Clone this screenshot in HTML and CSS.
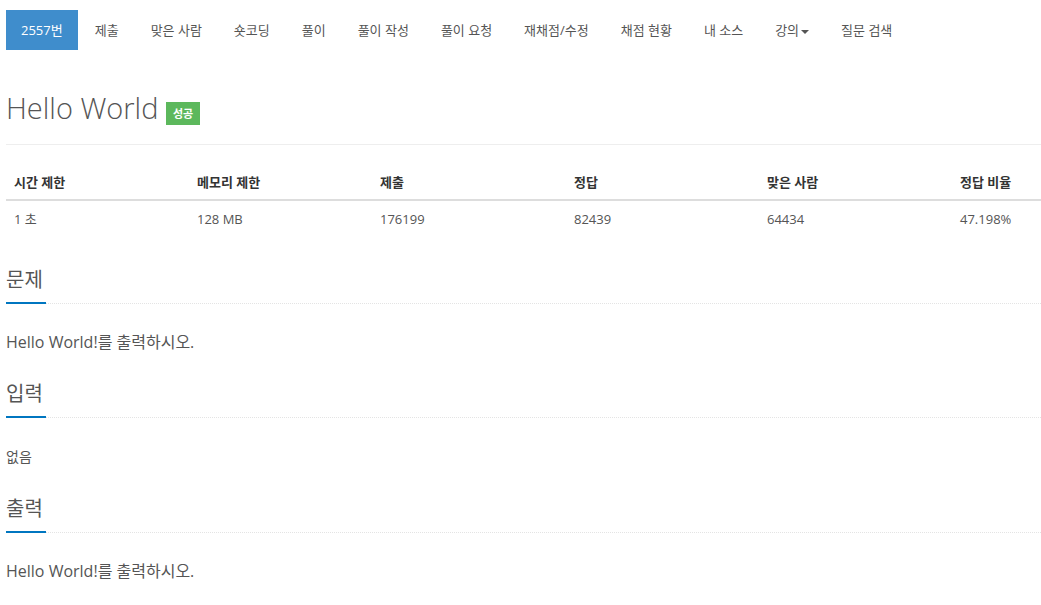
FILE: index.html
```html
<!DOCTYPE html>
<html lang="ko">
<head>
<meta charset="utf-8">
<link rel="stylesheet" href="styles.css">
</head>
<body>
<div class="wrap">
  <ul class="nav">
    <li class="active"><a>2557번</a></li>
    <li><a>제출</a></li>
    <li><a>맞은 사람</a></li>
    <li><a>숏코딩</a></li>
    <li><a>풀이</a></li>
    <li><a>풀이 작성</a></li>
    <li><a>풀이 요청</a></li>
    <li><a>재채점/수정</a></li>
    <li><a>채점 현황</a></li>
    <li><a>내 소스</a></li>
    <li><a>강의<span class="caret"></span></a></li>
    <li><a>질문 검색</a></li>
  </ul>

  <div class="page-header">
    <h1 class="title">Hello World <span class="label">성공</span></h1>
  </div>

  <table class="stats">
    <thead>
      <tr>
        <th class="c1">시간 제한</th>
        <th class="c2">메모리 제한</th>
        <th class="c3">제출</th>
        <th class="c4">정답</th>
        <th class="c5">맞은 사람</th>
        <th class="c6">정답 비율</th>
      </tr>
    </thead>
    <tbody>
      <tr>
        <td>1 초</td>
        <td>128 MB</td>
        <td>176199</td>
        <td>82439</td>
        <td>64434</td>
        <td>47.198%</td>
      </tr>
    </tbody>
  </table>

  <section class="problem-section">
    <div class="headline"><h2>문제</h2></div>
    <p class="problem-text">Hello World!를 출력하시오.</p>
  </section>

  <section class="problem-section">
    <div class="headline"><h2>입력</h2></div>
    <p class="problem-text small">없음</p>
  </section>

  <section class="problem-section">
    <div class="headline"><h2>출력</h2></div>
    <p class="problem-text">Hello World!를 출력하시오.</p>
  </section>
</div>
</body>
</html>
```

FILE: styles.css
```css
html, body {
  margin: 0;
  padding: 0;
  background: #fff;
}
body {
  font-family: "Open Sans", "Noto Sans CJK KR", sans-serif;
  font-size: 13px;
  line-height: 20px;
  color: #555;
}
.wrap {
  padding: 10px 0 0 6px;
}
.nav {
  list-style: none;
  margin: 0;
  padding: 0;
  display: flex;
}
.nav li + li {
  margin-left: 2px;
}
.nav a {
  display: block;
  padding: 10px 15px;
  line-height: 20px;
  color: #555;
  font-size: 13px;
}
.nav li.active a {
  background: #3f8dcc;
  color: #fff;
}
.caret {
  display: inline-block;
  width: 0;
  height: 0;
  margin-left: 2px;
  vertical-align: middle;
  border-top: 4px solid #555;
  border-left: 4px solid transparent;
  border-right: 4px solid transparent;
}
.page-header {
  margin: 40px 0 19px;
  padding-bottom: 18px;
  border-bottom: 1px solid #eee;
}
.title {
  margin: 0;
  font-size: 29px;
  line-height: 36px;
  font-weight: 300;
  color: #555;
}
.label {
  display: inline-block;
  vertical-align: 1px;
  background: #5cb85c;
  color: #fff;
  font-size: 11px;
  font-weight: 700;
  line-height: 13px;
  padding: 5px 7px;
}
.stats {
  width: 100%;
  border-collapse: collapse;
  margin-bottom: 29px;
}
.stats th, .stats td {
  text-align: left;
  padding: 8px;
  line-height: 20px;
  font-size: 13px;
}
.stats th {
  font-weight: 700;
  color: #333;
  border-bottom: 2px solid #ddd;
  padding-bottom: 7px;
}
.stats td {
  color: #555;
}
.c1 { width: 167px; }
.c2 { width: 167px; }
.c3 { width: 178px; }
.c4 { width: 177px; }
.c5 { width: 177px; }
.headline {
  border-bottom: 1px dotted #e4e4e4;
  margin-bottom: 20px;
}
.headline h2 {
  display: inline-block;
  margin: 0 0 -1px;
  padding: 0 0 9px;
  font-size: 20px;
  line-height: 27px;
  font-weight: 400;
  color: #555;
  border-bottom: 2px solid #0076c0;
  width: 40px;
  white-space: nowrap;
}
.problem-text {
  margin: 0 0 20px;
  font-size: 16px;
  line-height: 36px;
  color: #555;
}
.problem-text.small {
  font-size: 14px;
  line-height: 37px;
}
```
